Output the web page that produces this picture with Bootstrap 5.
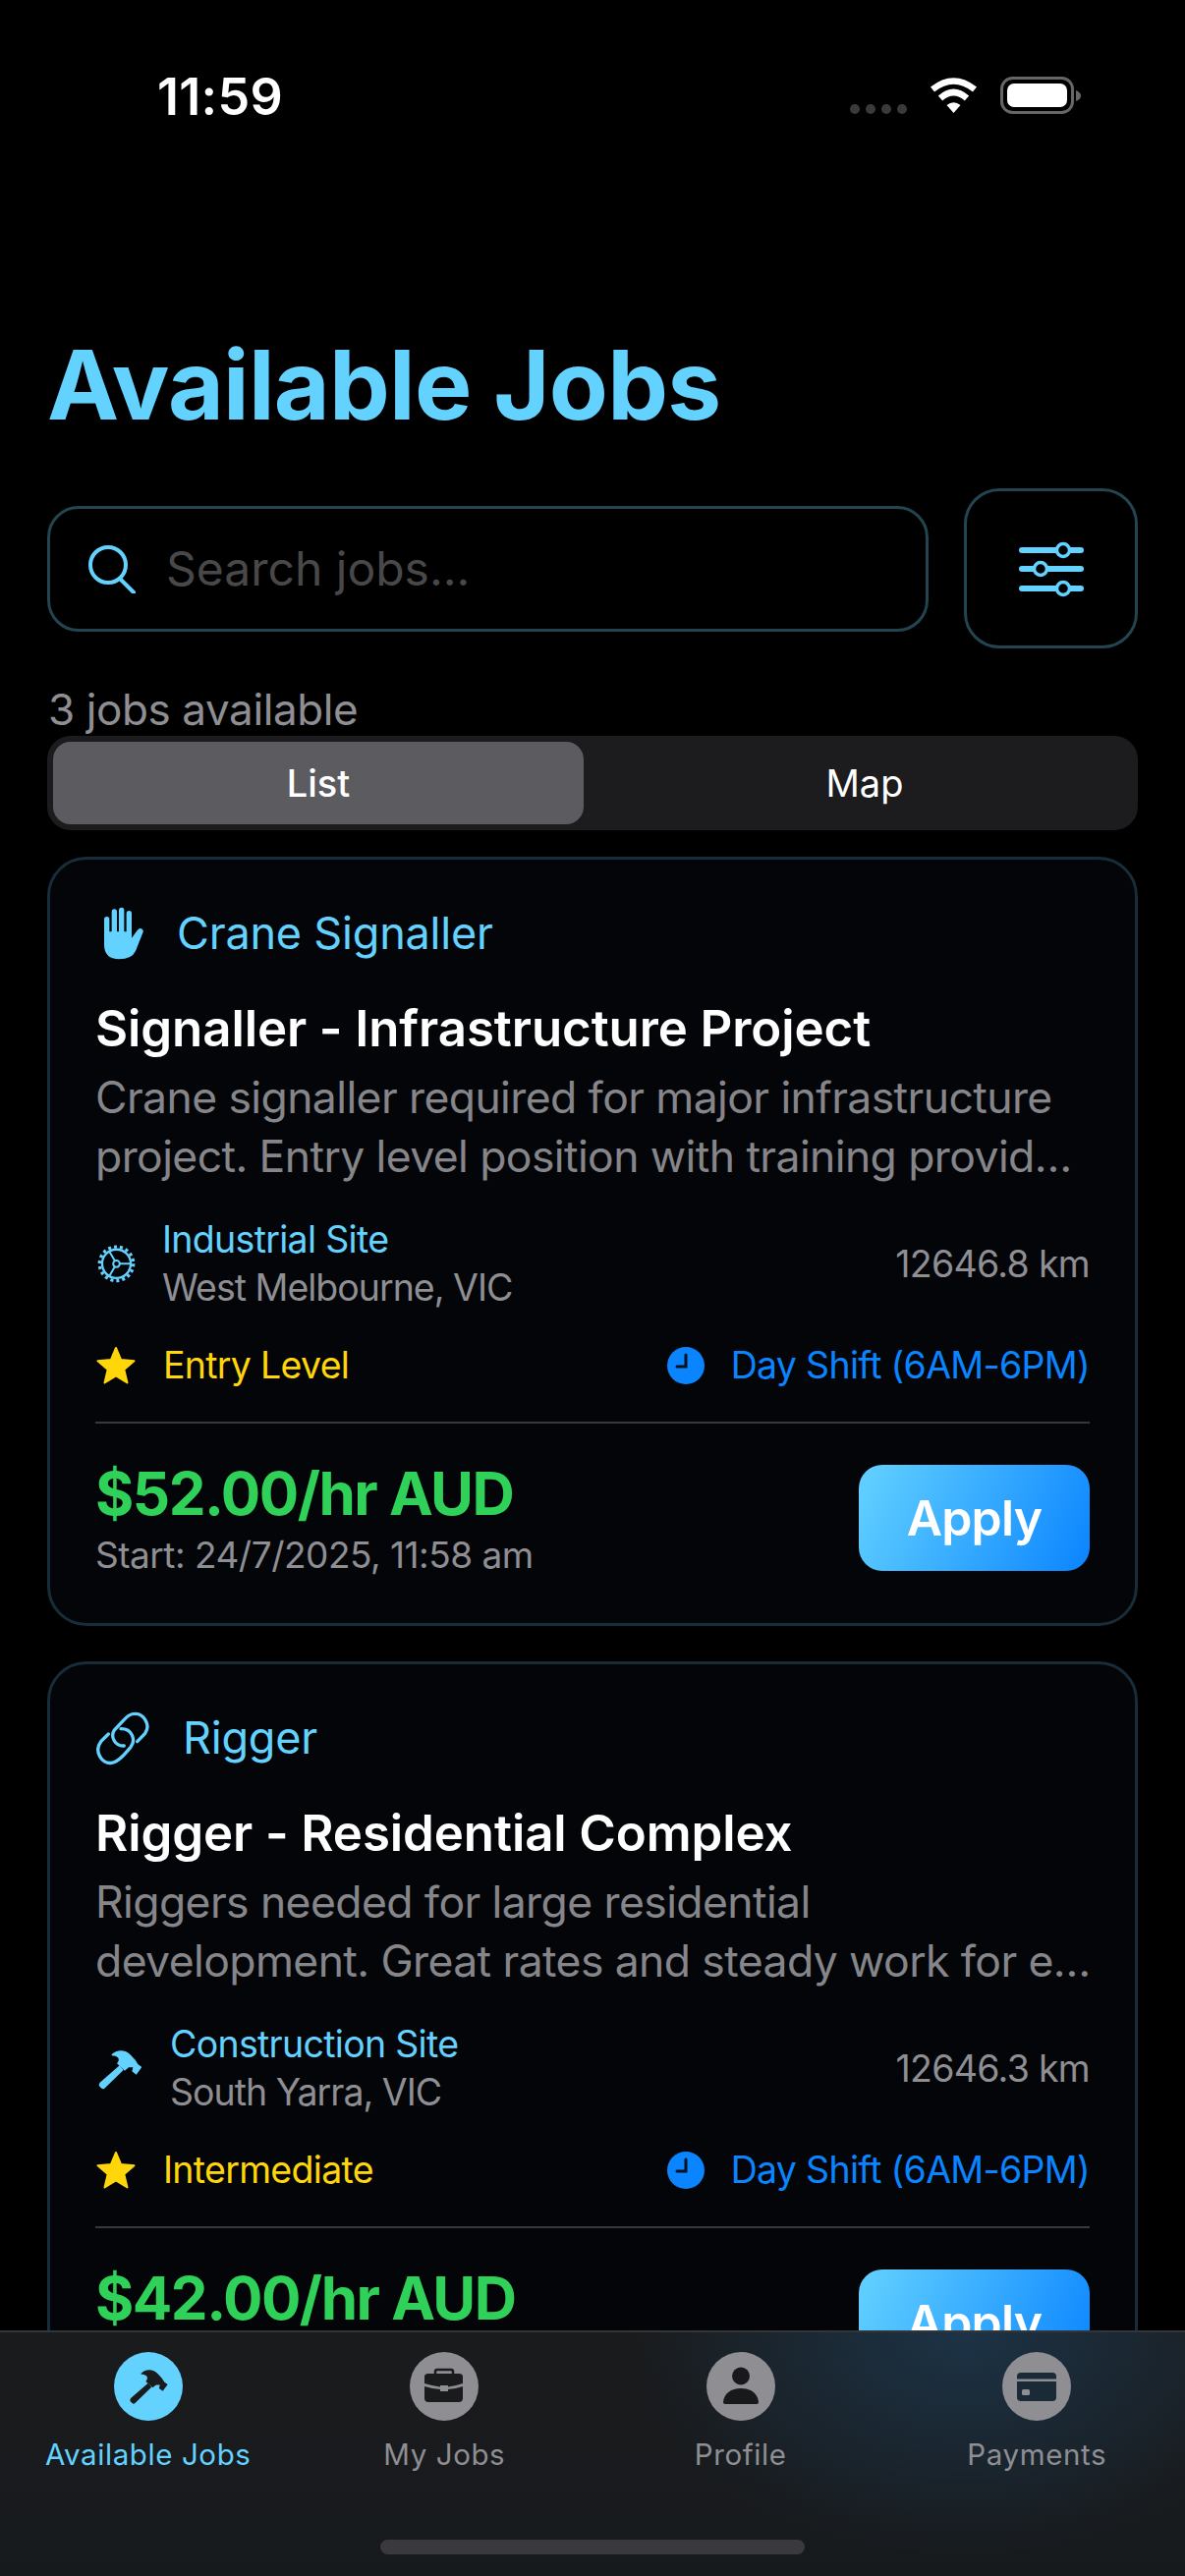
<!DOCTYPE html>
<html lang="en">
<head>
  <meta charset="UTF-8">
  <meta name="viewport" content="width=device-width,initial-scale=1">
  <title>Available Jobs</title>
  <link rel="stylesheet" href="https://cdn.jsdelivr.net/npm/bootstrap@5.3.2/dist/css/bootstrap.min.css">
  <style>
    html, body { height:100%; }
    body { width:1206px; height:2622px; background:#000; color:#fff; font-family:Inter,"Liberation Sans",sans-serif; overflow:hidden; }
    .phone { height:2622px; }
    .status-row { height:196px; padding:0 105px 0 160px; }
    .clock-text { font-size:52px; line-height:60px; font-weight:600; margin:0; padding-top:69px; letter-spacing:.3px; }
    .status-icons { padding-top:78px; }
    .content-area { padding:0 48px; overflow:hidden; min-height:0; }
    .page-title { font-size:98px; line-height:120px; font-weight:700; color:#64d2ff; margin:144px 0 0; letter-spacing:-.7px; }
    .search-row { margin-top:45px; height:163px; }
    .search-box { width:897px; height:128px; border:3px solid #234451; border-radius:32px; background:#000; padding:0 39px; }
    .search-icon { margin-right:29px; }
    .search-box input { background:transparent; border:0; padding:0; font-size:48px; color:#fff; box-shadow:none; font-family:inherit; }
    .search-box input::placeholder { color:#48484a; opacity:1; }
    .filter-btn { width:177px; height:163px; border:3px solid #234451; border-radius:36px; background:#000; padding:0; }
    .jobs-count { font-size:44px; line-height:50px; color:#8e8e93; margin:37px 0 0; padding-left:1px; letter-spacing:-.4px; }
    .view-switch { height:96px; background:#1c1c1e; border-radius:24px; padding:6px; margin-top:2px; }
    .view-switch .btn { border:0; color:#fff; font-size:38px; border-radius:18px; line-height:1; padding:0; }
    .view-switch .btn.selected { background:#5c5c60; flex:0 0 540px; font-weight:500; }
    .view-switch .btn.plain-seg { padding-left:14px; font-weight:400; }
    .job-card { background:#030508; border:3px solid #172d39; border-radius:40px; color:#fff; padding:45px 46px 44px; margin-top:27px; }
    .job-card + .job-card { margin-top:36px; }
    .trade-row { height:60px; font-size:45px; color:#64d2ff; gap:33px; letter-spacing:-.2px; }
    .hand-icon { margin-left:8px; }
    .job-title { font-size:51px; line-height:62px; font-weight:600; margin:36px 0 0; letter-spacing:-.1px; }
    .job-desc { font-size:44.5px; line-height:60px; color:#85858a; margin:9px 0 0; letter-spacing:-.6px; }
    .site-row { margin-top:30px; font-size:37.5px; line-height:49px; color:#8e8e93; letter-spacing:-.7px; }
    .site-type { color:#64d2ff; }
    .site-place { letter-spacing:-1px; }
    .site-icon { margin-right:25px; }
    .site-icon.hammer { margin-right:26px; }
    .shift-row { margin-top:33px; height:44px; font-size:37.5px; line-height:44px; letter-spacing:-.7px; }
    .level-text { color:#ffd60a; }
    .shift-text { color:#0a84ff; }
    .star-icon { margin-right:27px; }
    .clock-icon { margin-right:27px; }
    .card-rule { margin:35px 0 0; border:0; border-top:2px solid #38383a; opacity:1; }
    .pay-row { margin-top:36px; }
    .pay-text { font-size:60px; line-height:70px; font-weight:700; color:#30d158; letter-spacing:-1.5px; }
    .start-text { font-size:37px; line-height:50px; color:#8e8e93; margin-top:3px; letter-spacing:-.5px; }
    .apply-btn { width:235px; height:108px; margin-top:6px; border:0; border-radius:24px; background:linear-gradient(115deg,#64d2ff,#0a84ff); color:#fff; font-size:50px; font-weight:600; padding:0; letter-spacing:-.8px; }
    .tab-strip { height:250px; flex:none; border-top:2px solid #333537; background:radial-gradient(ellipse 340px 230px at 980px 0,#1c3346,rgba(28,51,70,0) 100%),linear-gradient(#1a1b1d,#171a1d); padding-top:20px; position:relative; }
    .tab-item { width:301.5px; font-size:29.5px; line-height:40px; color:#8e8e93; letter-spacing:.6px; text-decoration:none; }
    .tab-item.active-tab { color:#64d2ff; }
    .tab-item svg { display:block; margin-bottom:14px; }
    .home-bar { position:absolute; left:387px; top:211px; width:432px; height:15px; border-radius:8px; background:#3a3a3c; }
  </style>
</head>
<body>
  <div class="phone d-flex flex-column">
    <div class="flex-grow-1 d-flex flex-column overflow-hidden">
      <div class="d-flex justify-content-between status-row">
        <p class="clock-text">11:59</p>
        <div class="status-icons">
          <svg width="236" height="42" viewBox="0 0 236 42">
            <g fill="#3a3a3c"><rect x="0" y="28" width="10" height="10" rx="5"/><rect x="16" y="28" width="10" height="10" rx="5"/><rect x="32" y="28" width="10" height="10" rx="5"/><rect x="48" y="28" width="10" height="10" rx="5"/></g>
            <g transform="translate(5 0)">
              <g fill="none" stroke="#fff" stroke-width="6.5"><path d="M79 13 Q100.500 -4 122 13"/><path d="M87 22 Q100.500 10 114 22"/></g>
              <path d="M93.500 29 Q100.500 23.500 107.500 29 L100.500 37 Z" fill="#fff"/>
              <rect x="149.500" y="1.500" width="72" height="35" rx="11" fill="none" stroke="#666" stroke-width="3"/>
              <rect x="155" y="7" width="61" height="24" rx="7" fill="#fff"/>
              <path d="M225 14 Q230 16 230 19.500 Q230 23 225 25 Z" fill="#666"/>
            </g>
          </svg>
        </div>
      </div>

      <main class="content-area">
        <h1 class="page-title">Available Jobs</h1>

        <div class="d-flex justify-content-between align-items-center search-row">
          <div class="d-flex align-items-center search-box">
            <svg class="flex-shrink-0 search-icon" width="50" height="50" viewBox="0 0 50 50" fill="none" stroke="#64d2ff" stroke-width="4" stroke-linecap="round"><circle cx="20" cy="21" r="18"/><path d="M32 35 L46 49"/></svg>
            <input class="form-control" type="text" placeholder="Search jobs...">
          </div>
          <button class="filter-btn d-flex align-items-center justify-content-center" type="button" aria-label="Filter">
            <svg width="66" height="58" viewBox="0 0 66 58" stroke="#64d2ff" stroke-linecap="round">
              <g stroke-width="6" fill="none"><path d="M3 10 H63"/><path d="M3 29 H63"/><path d="M3 49 H63"/></g>
              <g stroke-width="3.500" fill="#000"><circle cx="45" cy="10" r="6.500"/><circle cx="22" cy="29" r="6.500"/><circle cx="45" cy="49" r="6.500"/></g>
            </svg>
          </button>
        </div>

        <p class="jobs-count">3 jobs available</p>

        <div class="d-flex view-switch">
          <button class="btn selected" type="button">List</button>
          <button class="btn plain-seg flex-grow-1" type="button">Map</button>
        </div>

        <section class="card job-card">
          <div class="d-flex align-items-center trade-row">
            <svg class="hand-icon" width="42" height="54" viewBox="142 100 124 162" fill="#64d2ff"><path d="M144 138 Q144 130 152 130 Q160 130 160 138 V176 H167 V115 Q167 107 175 107 Q183 107 183 115 V176 H189 V110 Q189 102 197 102 Q205 102 205 110 V176 H212 V120 Q212 112 220 112 Q228 112 228 120 V195 L245 172 Q252 163 260 168 Q266 173 261 182 L240 235 Q228 260 190 260 Q144 260 144 215 Z"/></svg>
            <span>Crane Signaller</span>
          </div>
          <h2 class="job-title">Signaller - Infrastructure Project</h2>
          <p class="job-desc text-nowrap">Crane signaller required for major infrastructure<br>project. Entry level position with training provid…</p>
          <div class="d-flex justify-content-between align-items-center site-row">
            <div class="d-flex align-items-center">
              <svg class="site-icon" width="43" height="45" viewBox="110 100 130 135" fill="none" stroke="#64d2ff"><circle cx="175" cy="167" r="44" stroke-width="7"/><circle cx="175" cy="167" r="52" stroke-width="10" stroke-dasharray="9 9.150"/><circle cx="175" cy="167" r="10" stroke-width="6"/><path d="M185 167 H220 M170 158 L153 129 M170 176 L153 205" stroke-width="6"/></svg>
              <div><div class="site-type">Industrial Site</div><div class="site-place">West Melbourne, VIC</div></div>
            </div>
            <span>12646.8 km</span>
          </div>
          <div class="d-flex justify-content-between align-items-center shift-row">
            <div class="d-flex align-items-center">
              <svg class="star-icon" width="42" height="40" viewBox="0 0 42 40"><path d="M21 2 L26 14 L39.500 15.200 L29.300 24 L32.500 37.500 L21 30.300 L9.500 37.500 L12.700 24 L2.500 15.200 L16 14 Z" fill="#ffd60a" stroke="#ffd60a" stroke-width="2" stroke-linejoin="round"/></svg>
              <span class="level-text">Entry Level</span>
            </div>
            <div class="d-flex align-items-center">
              <svg class="clock-icon" width="38" height="38" viewBox="0 0 38 38"><circle cx="19" cy="19" r="19" fill="#0a84ff"/><path d="M19 8 V20 H10" fill="none" stroke="#03101e" stroke-width="3" stroke-linecap="round"/></svg>
              <span class="shift-text">Day Shift (6AM-6PM)</span>
            </div>
          </div>
          <hr class="card-rule">
          <div class="d-flex justify-content-between align-items-start pay-row">
            <div><div class="pay-text">$52.00/hr AUD</div><div class="start-text">Start: 24/7/2025, 11:58 am</div></div>
            <button class="btn apply-btn" type="button">Apply</button>
          </div>
        </section>

        <section class="card job-card">
          <div class="d-flex align-items-center trade-row">
            <svg width="56" height="56" viewBox="120 60 168 168" fill="none" stroke="#64d2ff" stroke-width="10" stroke-linecap="round"><path d="M248 155 L272 130 C290 105 268 68 240 70 C225 70 215 80 208 88 L178 120 C165 140 180 170 208 168"/><path d="M160 132 L137 155 C115 185 140 225 170 220 C185 218 195 208 205 198 L228 172 C245 150 232 115 198 116"/></svg>
            <span>Rigger</span>
          </div>
          <h2 class="job-title">Rigger - Residential Complex</h2>
          <p class="job-desc text-nowrap">Riggers needed for large residential<br>development. Great rates and steady work for e…</p>
          <div class="d-flex justify-content-between align-items-center site-row">
            <div class="d-flex align-items-center">
              <svg class="site-icon hammer" width="50" height="44" viewBox="110 65 150 130" fill="#64d2ff"><path d="M160 88 C175 73 202 72 218 90 L232 105 L240 118 L252 127 L235 150 L222 140 L225 128 L212 128 L200 138 L176 116 C190 100 175 92 160 92 Z"/><path d="M184 122 L196 136 L138 192 Q132 196 127 190 L123 186 Q119 180 124 174 Z"/></svg>
              <div><div class="site-type">Construction Site</div><div class="site-place">South Yarra, VIC</div></div>
            </div>
            <span>12646.3 km</span>
          </div>
          <div class="d-flex justify-content-between align-items-center shift-row">
            <div class="d-flex align-items-center">
              <svg class="star-icon" width="42" height="40" viewBox="0 0 42 40"><path d="M21 2 L26 14 L39.500 15.200 L29.300 24 L32.500 37.500 L21 30.300 L9.500 37.500 L12.700 24 L2.500 15.200 L16 14 Z" fill="#ffd60a" stroke="#ffd60a" stroke-width="2" stroke-linejoin="round"/></svg>
              <span class="level-text">Intermediate</span>
            </div>
            <div class="d-flex align-items-center">
              <svg class="clock-icon" width="38" height="38" viewBox="0 0 38 38"><circle cx="19" cy="19" r="19" fill="#0a84ff"/><path d="M19 8 V20 H10" fill="none" stroke="#03101e" stroke-width="3" stroke-linecap="round"/></svg>
              <span class="shift-text">Day Shift (6AM-6PM)</span>
            </div>
          </div>
          <hr class="card-rule">
          <div class="d-flex justify-content-between align-items-start pay-row">
            <div class="pay-text">$42.00/hr AUD</div>
            <button class="btn apply-btn" type="button">Apply</button>
          </div>
        </section>
      </main>
    </div>

    <nav class="d-flex tab-strip">
      <a class="d-flex flex-column align-items-center tab-item active-tab" href="#">
        <svg width="70" height="70" viewBox="0 0 70 70"><circle cx="35" cy="35" r="35" fill="#64d2ff"/><svg x="13" y="13" width="44" height="42" viewBox="110 65 150 130" fill="#1a1b1d"><path d="M160 88 C175 73 202 72 218 90 L232 105 L240 118 L252 127 L235 150 L222 140 L225 128 L212 128 L200 138 L176 116 C190 100 175 92 160 92 Z"/><path d="M184 122 L196 136 L138 192 Q132 196 127 190 L123 186 Q119 180 124 174 Z"/></svg></svg>
        Available Jobs
      </a>
      <a class="d-flex flex-column align-items-center tab-item" href="#">
        <svg width="70" height="70" viewBox="0 0 70 70"><circle cx="35" cy="35" r="35" fill="#8e8e93"/><g fill="#1a1b1d"><path d="M15 25 Q15 22 19 22 H50 Q54 22 54 25 V32 Q47 34.500 39 35.500 V34 H31 V35.500 Q23 34.500 15 32 Z"/><path d="M15 35 Q23 37.500 31 38 V40 H39 V38 Q47 37.500 54 35 V47 Q54 51 50 51 H19 Q15 51 15 47 Z"/></g><path d="M26 22 V20 Q26 18 28 18 H42 Q44 18 44 20 V22" fill="none" stroke="#1a1b1d" stroke-width="2.500"/></svg>
        My Jobs
      </a>
      <a class="d-flex flex-column align-items-center tab-item" href="#">
        <svg width="70" height="70" viewBox="0 0 70 70"><circle cx="35" cy="35" r="35" fill="#8e8e93"/><g fill="#17191b"><circle cx="35" cy="24.500" r="9"/><path d="M17 51 C18 42 25 37 35 37 C45 37 52 42 53 51 Q53 53 51 53 H19 Q17 53 17 51 Z"/></g></svg>
        Profile
      </a>
      <a class="d-flex flex-column align-items-center tab-item" href="#">
        <svg width="70" height="70" viewBox="0 0 70 70"><circle cx="35" cy="35" r="35" fill="#8e8e93"/><g fill="#1a2a36"><path d="M15 27.500 V25 Q15 21 19 21 H51 Q55 21 55 25 V27.500 Z"/><path d="M15 30 H55 V46 Q55 50 51 50 H19 Q15 50 15 46 Z"/></g><rect x="20" y="38" width="8" height="6" rx="1.500" fill="#8e8e93"/></svg>
        Payments
      </a>
      <div class="home-bar"></div>
    </nav>
  </div>
  <script src="https://cdn.jsdelivr.net/npm/bootstrap@5.3.2/dist/js/bootstrap.bundle.min.js"></script>
</body>
</html>
